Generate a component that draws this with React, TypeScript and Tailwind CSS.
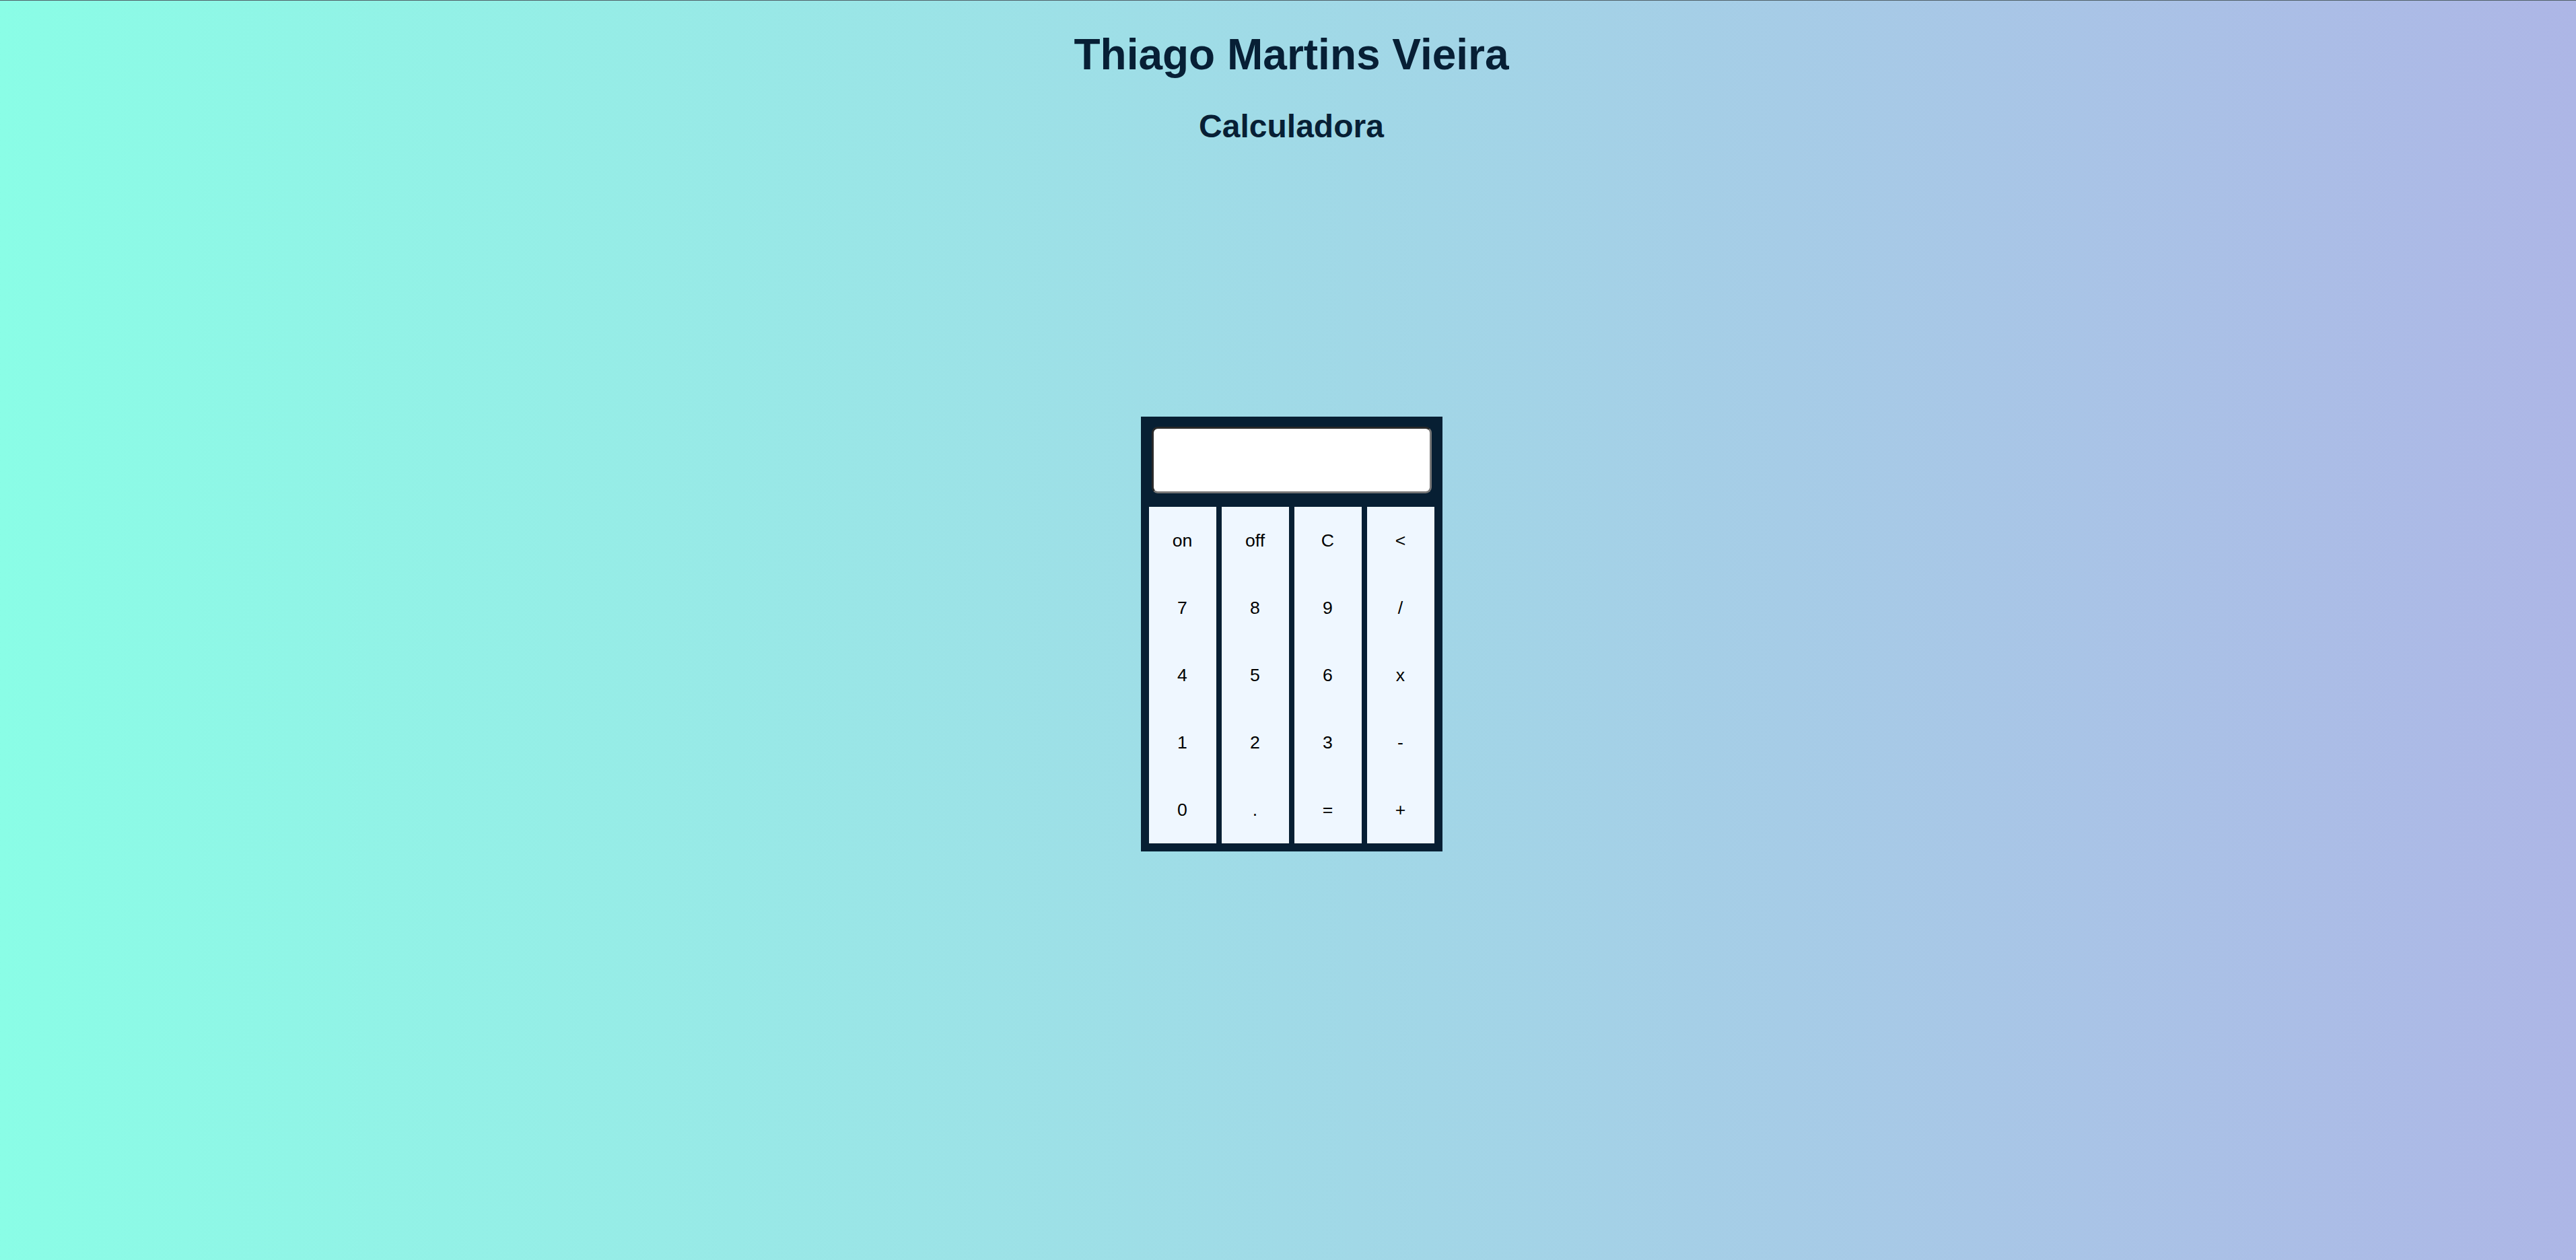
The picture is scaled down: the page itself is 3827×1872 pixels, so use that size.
import React from "react";

const keys = [
  "on", "off", "C", "<",
  "7", "8", "9", "/",
  "4", "5", "6", "x",
  "1", "2", "3", "-",
  "0", ".", "=", "+",
];

export default function App() {
  return (
    <div
      className="min-h-screen w-full flex flex-col items-center pl-[10px] bg-gradient-to-r from-[#8afde6] to-[#adb6e6] border-t border-[#4f5f66]"
      style={{ fontFamily: '"Liberation Sans", Arial, sans-serif' }}
    >
      <h1 className="mt-[43px] text-[64px] leading-[74px] font-bold text-[#071f35]">
        Thiago Martins Vieira
      </h1>
      <h2 className="mt-[42px] text-[48px] leading-[55px] font-bold text-[#071f35]">
        Calculadora
      </h2>
      <div className="mt-[404px] w-[448px] bg-[#071f33] pt-[15px] pb-[12px] px-[12px]">
        <div className="mx-[4px] h-[99px] rounded-[9px] bg-white border-[3px] border-t-[#2a2a2a] border-l-[#2a2a2a] border-b-[#777777] border-r-[#777777]" />
        <div className="mt-[20px] grid grid-cols-4 gap-x-[8px]">
          {keys.map((k) => (
            <button
              key={k}
              className="h-[100px] w-[100px] bg-[#eff7ff] text-black text-[26.67px] flex items-center justify-center"
              style={{ fontFamily: '"Liberation Sans", Arial, sans-serif' }}
            >
              {k}
            </button>
          ))}
        </div>
      </div>
    </div>
  );
}
